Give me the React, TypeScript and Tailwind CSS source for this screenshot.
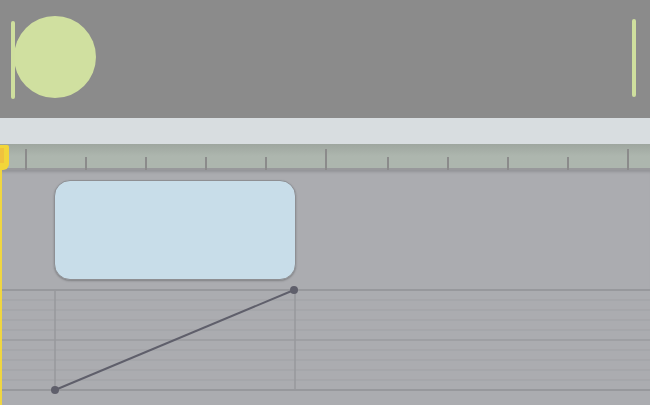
// Arrangement view: header, ruler, clip lane and automation lane

const minorTicks = [86, 146, 206, 266, 388, 448, 508, 568];
const majorTicks = [26, 326, 628];
const gridRows = [11, 21, 31, 41, 61, 71, 81, 91];

function Ruler() {
  return (
    <div className="relative h-[26px] bg-gradient-to-b from-[#9ea69f] via-[#adb6ae] to-[#adb6ae] border-b-2 border-[#98989b]">
      <svg className="absolute inset-0" width={650} height={26}>
        {majorTicks.map((x) => (
          <rect key={x} x={x - 1} y={5} width={2} height={21} fill="#8b8b8b" />
        ))}
        {minorTicks.map((x) => (
          <rect key={x} x={x - 1} y={13} width={2} height={13} fill="#8b8b8b" />
        ))}
      </svg>
    </div>
  );
}

function AutomationLane() {
  return (
    <svg width={650} height={103} className="block overflow-visible">
      {gridRows.map((y) => (
        <line key={y} x1={0} x2={650} y1={y} y2={y} stroke="#a0a1a5" strokeWidth={1} />
      ))}
      <line x1={0} x2={650} y1={51} y2={51} stroke="#9a9b9f" strokeWidth={1.5} />
      <line x1={0} x2={650} y1={1} y2={1} stroke="#97989c" strokeWidth={2} />
      <line x1={0} x2={650} y1={101} y2={101} stroke="#97989c" strokeWidth={2} />
      <line x1={55} x2={55} y1={1} y2={101} stroke="#97989c" strokeWidth={1.5} />
      <line x1={295} x2={295} y1={1} y2={101} stroke="#97989c" strokeWidth={1.5} />
      <line x1={55} y1={101} x2={294} y2={1} stroke="#5f5f6b" strokeWidth={2} />
      <circle cx={55} cy={101} r={4} fill="#5f5f6b" />
      <circle cx={294} cy={1} r={4} fill="#5f5f6b" />
    </svg>
  );
}

export default function App() {
  return (
    <div className="relative w-[650px] h-[405px] overflow-hidden bg-[#abacb0]">
      {/* Header with clip launch indicators */}
      <div className="flex h-[118px] bg-[#8b8b8b]">
        <div className="ml-[11px] mt-[21px] w-[4px] h-[78px] rounded-full bg-[#cfdf9e]" />
        <div className="-ml-[1px] mt-[16px] w-[82px] h-[82px] rounded-full bg-[#d0e0a0]" />
        <div className="ml-auto mr-[14px] mt-[19px] w-[4px] h-[78px] rounded-full bg-[#cfdf9e]" />
      </div>

      <div className="h-[26px] bg-[#d8dde0]" />

      <Ruler />

      {/* Clip track */}
      <div className="relative z-10 h-[119px] pt-[10px] pl-[54px] shadow-[inset_0_4px_3px_-2px_rgba(0,0,0,0.15)]">
        <div className="w-[242px] h-[100px] rounded-[16px] bg-[#c8dde9] border border-[#8e8f93] shadow-[0_1px_2px_rgba(0,0,0,0.25)]" />
      </div>

      <AutomationLane />

      {/* Playhead */}
      <div className="absolute z-20 left-0 top-[145px] w-[9px] h-[25px] rounded-tr-[2px] rounded-br-[6px] bg-[#f2d63a] pt-[3px]">
        <div className="w-[4px] h-[15px] bg-[#f0c23e]" />
      </div>
      <div className="absolute z-20 left-0 top-[170px] bottom-0 w-[2px] bg-[#f0d640]" />
    </div>
  );
}
